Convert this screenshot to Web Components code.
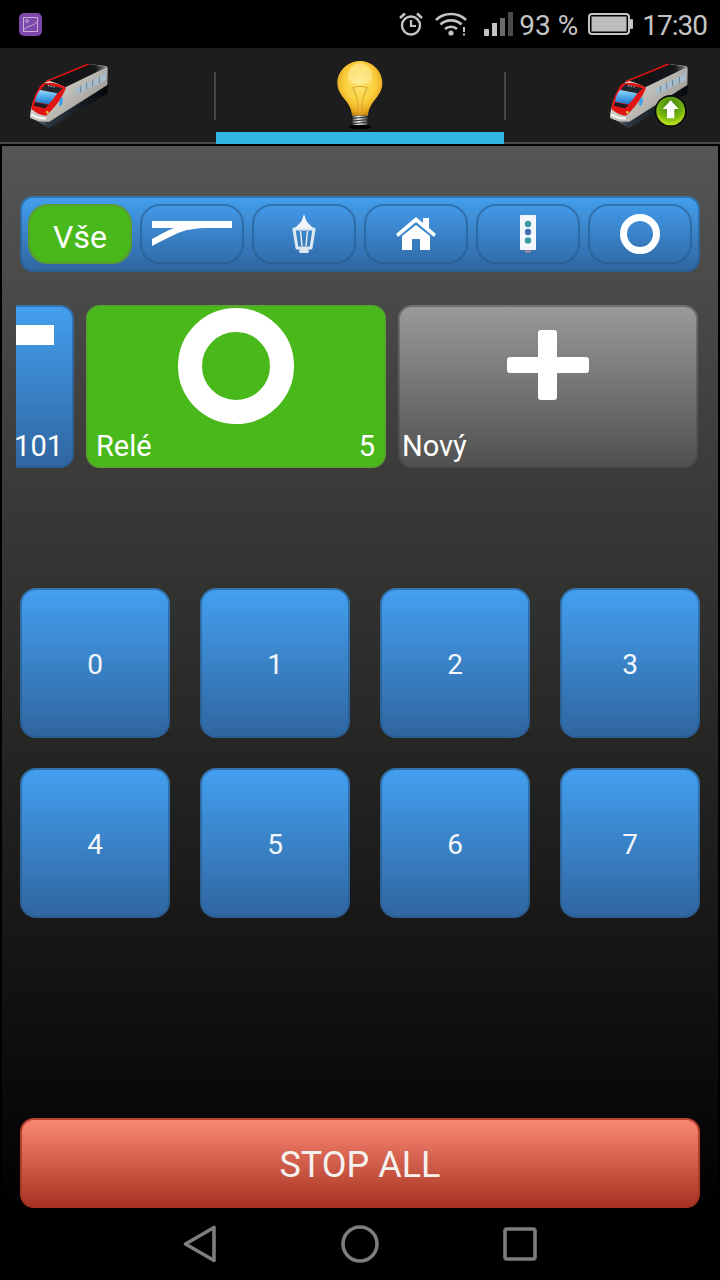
<!DOCTYPE html>
<html>
<head>
<meta charset="utf-8">
<title>Rail control</title>
<style>
    html, body { margin: 0; padding: 0; background: #000; }
    body {
        width: 720px;
        height: 1280px;
        overflow: hidden;
        display: flex;
        flex-direction: column;
        font-family: Roboto, "Liberation Sans", sans-serif;
    }
</style>
</head>
<body>
<status-bar></status-bar>

<tab-bar>
    <tab-item style="width:214px;padding-left:20px"><train-icon></train-icon></tab-item>
    <tab-sep></tab-sep>
    <tab-item selected style="width:288px;justify-content:center"><bulb-icon></bulb-icon></tab-item>
    <tab-sep></tab-sep>
    <tab-item style="width:214px;justify-content:flex-end;padding-right:20px"><train-icon upload></train-icon></tab-item>
</tab-bar>

<rail-panel>
    <filter-bar>
        <filter-btn selected><span>Vše</span></filter-btn>
        <filter-btn>
            <svg width="80" height="26" viewBox="0 0 80 26">
                <path d="M0 0H80V7H60C42 7 33 9 26 12C17 16 8 21 0 25V18C6 15 14 10 22 7H0Z" fill="#fff"/>
            </svg>
        </filter-btn>
        <filter-btn>
            <svg width="26" height="40" viewBox="0 0 26 40">
                <path d="M13 0L15 6L16 8L22 14H4L10 8L11 6Z" fill="#f2f6fa"/>
                <path d="M3 15H23L20 34H6Z" fill="none" stroke="#dfe9f2" stroke-width="3" stroke-linejoin="round"/>
                <path d="M9.5 17L11 32M16.5 17L15 32" stroke="#dfe9f2" stroke-width="1.6"/>
                <rect x="8" y="35" width="10" height="4" rx="2" fill="#dde7f0"/>
            </svg>
        </filter-btn>
        <filter-btn>
            <svg width="40" height="34" viewBox="0 0 40 34">
                <path d="M0 17L20 0L27 6V1H33V11L40 17L38 20L20 5L2 20Z" fill="#fff"/>
                <path d="M6 19L20 8L34 19V33H24V22H16V33H6Z" fill="#fff"/>
            </svg>
        </filter-btn>
        <filter-btn>
            <svg width="16" height="38" viewBox="0 0 16 38">
                <rect width="16" height="35" rx="1" fill="#f4f7fa"/>
                <circle cx="8" cy="9" r="3.2" fill="#3b97a8"/>
                <circle cx="8" cy="17" r="3.2" fill="#4470b8"/>
                <circle cx="8" cy="25.5" r="3.2" fill="#3b97a8"/>
                <rect x="5" y="35.5" width="6" height="2" fill="#b18a9c"/>
            </svg>
        </filter-btn>
        <filter-btn>
            <svg width="40" height="40" viewBox="0 0 40 40">
                <circle cx="20" cy="20" r="16.5" fill="none" stroke="#fff" stroke-width="7"/>
            </svg>
        </filter-btn>
    </filter-bar>

    <card-row>
        <rail-card tone="blue">
            <svg slot="icon" width="260" height="116" viewBox="0 0 260 116"><rect y="17" width="260" height="20" fill="#fff"/></svg>
            <span slot="right">101</span>
        </rail-card>
        <rail-card tone="green" style="--pad-l:8px;--pad-r:9px">
            <svg slot="icon" width="116" height="116" viewBox="0 0 116 116"><circle cx="58" cy="58" r="46" fill="none" stroke="#fff" stroke-width="24"/></svg>
            <span slot="left">Relé</span>
            <span slot="right">5</span>
        </rail-card>
        <rail-card tone="grey" style="--pad-l:2px">
            <svg slot="icon" width="89" height="116" viewBox="0 0 89 116">
                <rect x="38" y="22" width="19" height="70" rx="3" fill="#fff"/>
                <rect x="7" y="49" width="82" height="16" rx="3" fill="#fff"/>
            </svg>
            <span slot="left">Nový</span>
        </rail-card>
    </card-row>

    <key-grid>
        <num-key>0</num-key>
        <num-key>1</num-key>
        <num-key>2</num-key>
        <num-key>3</num-key>
        <num-key>4</num-key>
        <num-key>5</num-key>
        <num-key>6</num-key>
        <num-key>7</num-key>
    </key-grid>

    <stop-button>STOP ALL</stop-button>
</rail-panel>

<nav-bar></nav-bar>

<script>
// small helper, every element gets an open shadow root from its template
function makeElement(name, html) {
    const $template = document.createElement("template");
    $template.innerHTML = html;
    customElements.define(name, class extends HTMLElement {
        constructor() {
            super();
            this.attachShadow({mode: 'open'});
            this.shadowRoot.appendChild($template.content.cloneNode(true));
        }
    });
}

makeElement("status-bar", /*html*/ `
    <style>
        :host {
            display: flex;
            align-items: center;
            height: 48px;
            flex: none;
            background: #000;
            color: #c4c4c4;
            font-size: 28px;
            box-sizing: border-box;
            padding: 0 13px 0 19px;
        }
        .right { margin-left: auto; display: flex; align-items: center; }
        svg { display: block; }
        span { padding-top: 2px; }
        .pct { margin-left: 6px; }
        .time { margin-left: 9px; letter-spacing: -1px; }
    </style>
    <svg width="23" height="23" viewBox="0 0 23 23">
        <rect width="23" height="23" rx="5" fill="#7d48aa"/>
        <rect x="4.5" y="4.5" width="14" height="14" fill="none" stroke="#c5aed9" stroke-width="1"/>
        <circle cx="8" cy="8" r="1.5" fill="none" stroke="#c5aed9"/>
        <path d="M5 17C8 12 11 15 18 9" fill="none" stroke="#c5aed9"/>
    </svg>
    <div class="right">
        <svg width="24" height="24" viewBox="0 0 24 24" style="margin-right:12px">
            <circle cx="12" cy="13.5" r="9" fill="none" stroke="#c4c4c4" stroke-width="2.4"/>
            <path d="M12 8V14H17" fill="none" stroke="#c4c4c4" stroke-width="2.2"/>
            <path d="M1 6L6 1.5M23 6L18 1.5" stroke="#c4c4c4" stroke-width="2.6"/>
        </svg>
        <svg width="32" height="24" viewBox="0 0 32 24" style="margin-right:17px">
            <path d="M1 8C9 0 23 0 31 8" fill="none" stroke="#c4c4c4" stroke-width="2.6"/>
            <path d="M5.5 12.5C11 7 21 7 26.5 12.5" fill="none" stroke="#c4c4c4" stroke-width="2.6"/>
            <path d="M10 17C13 14 19 14 22 17" fill="none" stroke="#c4c4c4" stroke-width="2.6"/>
            <circle cx="16" cy="21" r="2.6" fill="#c4c4c4"/>
            <rect x="28" y="15" width="2" height="5" fill="#c4c4c4"/>
            <rect x="28" y="21.5" width="2" height="2" fill="#c4c4c4"/>
        </svg>
        <svg width="29" height="24" viewBox="0 0 29 24">
            <rect x="0" y="17" width="5" height="7" rx="1" fill="#c4c4c4"/>
            <rect x="8" y="11" width="5" height="13" fill="#c4c4c4"/>
            <rect x="16" y="6" width="5" height="18" fill="#6b6b6b"/>
            <rect x="24" y="0" width="5" height="24" fill="#4a4a4a"/>
        </svg>
        <span class="pct">93 %</span>
        <svg width="45" height="22" viewBox="0 0 45 22" style="margin-left:10px">
            <rect x="1" y="1" width="40" height="20" rx="3" fill="none" stroke="#c4c4c4" stroke-width="2"/>
            <rect x="3.5" y="3.5" width="35" height="15" fill="#bdbdbd"/>
            <rect x="42" y="6" width="3" height="10" rx="1" fill="#c4c4c4"/>
        </svg>
        <span class="time">17:30</span>
    </div>
`);

makeElement("tab-bar", /*html*/ `
    <style>
        :host {
            display: flex;
            flex: none;
            height: 96px;
            box-sizing: border-box;
            background: #1d1d1d;
            border-bottom: 2px solid #4a4a4a;
        }
    </style>
    <slot></slot>
`);

makeElement("tab-sep", /*html*/ `
    <style>
        :host {
            display: block;
            flex: none;
            width: 2px;
            height: 48px;
            margin-top: 24px;
            background: #474747;
        }
    </style>
`);

makeElement("tab-item", /*html*/ `
    <style>
        :host {
            display: flex;
            flex: none;
            box-sizing: border-box;
            align-items: flex-start;
        }
        :host([selected]) {
            border-bottom: 12px solid #33b5e5;
            margin-bottom: -2px;
        }
    </style>
    <slot></slot>
`);

makeElement("train-icon", /*html*/ `
    <style>
        :host { display: block; width: 100px; height: 80px; margin-top: 7px; }
        svg { display: block; }
        .badge { display: none; }
        :host([upload]) .badge { display: inline; }
    </style>
    <svg width="100" height="80" viewBox="0 0 300 240">
        <defs>
            <linearGradient id="silver" x1="0" y1="0" x2="1" y2="0.7">
                <stop offset="0" stop-color="#f4f4f2"/>
                <stop offset="0.45" stop-color="#cbc8c2"/>
                <stop offset="1" stop-color="#94928e"/>
            </linearGradient>
            <linearGradient id="roof" x1="0" y1="0" x2="1" y2="0">
                <stop offset="0" stop-color="#101214"/>
                <stop offset="0.8" stop-color="#15171a"/>
                <stop offset="1" stop-color="#8e8e8e"/>
            </linearGradient>
            <linearGradient id="glass" x1="0" y1="0" x2="0" y2="1">
                <stop offset="0" stop-color="#8fdcff"/>
                <stop offset="1" stop-color="#1474cf"/>
            </linearGradient>
            <linearGradient id="under" x1="0" y1="0" x2="1" y2="0">
                <stop offset="0" stop-color="#a6b2ba"/>
                <stop offset="0.22" stop-color="#2c3640"/>
                <stop offset="1" stop-color="#05080b"/>
            </linearGradient>
            <radialGradient id="ball" cx="0.5" cy="0.3" r="0.75">
                <stop offset="0" stop-color="#3d7f10"/>
                <stop offset="0.6" stop-color="#74b50e"/>
                <stop offset="1" stop-color="#d7f020"/>
            </radialGradient>
        </defs>
        <path d="M30 184L86 220L262 116L264 86L88 186Z" fill="url(#under)"/>
        <path d="M30 186C32 150 50 105 82 76L206 27L256 33Q264 34 263 44L262 90L88 200Q58 203 32 190Z" fill="url(#silver)"/>
        <path d="M82 76L206 27L262 36L232 50L136 97Q108 82 82 76Z" fill="url(#roof)"/>
        <path d="M78 80L206 27" fill="none" stroke="#e30f0f" stroke-width="4.5"/>
        <path d="M165 101L258 55L258 74L168 120Z" fill="#a8bccb"/>
        <path d="M182 92V112M200 83V103M218 74V94M238 65V85" stroke="#6d8294" stroke-width="3"/>
        <path d="M66 86C48 108 38 135 34 162Q55 180 78 182C104 158 126 130 138 98Q100 76 66 86Z" fill="#e01414"/>
        <path d="M76 88L128 100L112 116L62 104Z" fill="#20262c"/>
        <path d="M60 105L112 115Q100 134 86 148L45 140Q48 120 60 105Z" fill="url(#glass)"/>
        <path d="M45 142L86 150L74 160L42 152Z" fill="#1b1d20"/>
        <path d="M84 92L104 96" stroke="#8b98a5" stroke-width="5" stroke-dasharray="4 4"/>
        <path d="M34 178Q55 192 78 190" fill="none" stroke="#f6f5f2" stroke-width="7"/>
        <circle cx="82" cy="172" r="4" fill="#e2c52a"/>
        <ellipse cx="123" cy="140" rx="5" ry="13" transform="rotate(12 123 140)" fill="#3f9fe6"/>
        <g class="badge">
            <circle cx="212" cy="168" r="48" fill="#0a0a0a"/>
            <circle cx="212" cy="168" r="43" fill="url(#ball)"/>
            <path d="M212 136L236 162H223V190H201V162H188Z" fill="#fff"/>
        </g>
    </svg>
`);

makeElement("bulb-icon", /*html*/ `
    <style>
        :host { display: block; width: 80px; height: 80px; margin-top: 7px; }
        svg { display: block; }
    </style>
    <svg width="80" height="80" viewBox="0 0 240 240">
        <defs>
            <radialGradient id="glow" cx="0.5" cy="0.4" r="0.62">
                <stop offset="0" stop-color="#ffe87a"/>
                <stop offset="0.55" stop-color="#fbcf3c"/>
                <stop offset="0.85" stop-color="#e8a920"/>
                <stop offset="1" stop-color="#b87a12"/>
            </radialGradient>
            <linearGradient id="screw" x1="0" y1="0" x2="1" y2="0">
                <stop offset="0" stop-color="#5c5c5c"/>
                <stop offset="0.4" stop-color="#efefef"/>
                <stop offset="1" stop-color="#4a4a4a"/>
            </linearGradient>
        </defs>
        <ellipse cx="120" cy="216" rx="36" ry="6" fill="#000"/>
        <path d="M120 18C84 18 52 47 52 85C52 112 72 128 84 146C92 158 95 168 96 182H144C145 168 148 158 156 146C168 128 187 112 187 85C187 47 156 18 120 18Z" fill="url(#glow)"/>
        <path d="M120 24C96 26 82 46 84 70C86 92 140 95 155 72C162 50 146 26 120 24Z" fill="#fff6c4" opacity=".4"/>
        <path d="M94 100Q120 88 146 100M100 100L114 140V178M140 100L126 140V178" fill="none" stroke="#d3a530" stroke-width="3"/>
        <rect x="98" y="182" width="44" height="28" rx="4" fill="url(#screw)"/>
        <path d="M98 190L142 186M98 198L142 194M100 206L140 202" stroke="#2e2e2e" stroke-width="3"/>
    </svg>
`);

makeElement("rail-panel", /*html*/ `
    <style>
        :host {
            display: flex;
            flex-direction: column;
            flex: 1;
            min-height: 0;
            margin: 2px 2px 0;
            padding: 50px 18px 8px;
            background: linear-gradient(#555653, #000);
        }
    </style>
    <slot></slot>
`);

makeElement("filter-bar", /*html*/ `
    <style>
        :host {
            display: flex;
            gap: 8px;
            flex: none;
            height: 76px;
            box-sizing: border-box;
            padding: 6px;
            border: 2px solid rgba(40, 90, 140, .65);
            border-radius: 13px;
            background: linear-gradient(#44a0f0, #2f659f) border-box;
        }
    </style>
    <slot></slot>
`);

makeElement("filter-btn", /*html*/ `
    <style>
        :host {
            display: flex;
            align-items: center;
            justify-content: center;
            width: 104px;
            height: 60px;
            box-sizing: border-box;
            border: 2px solid rgba(40, 90, 140, .6);
            border-radius: 20px;
            color: #fff;
            font-size: 32px;
        }
        :host([selected]) {
            background: #48b81a;
            border-color: #5a9c32;
        }
        ::slotted(span) { margin-top: 6px; }
    </style>
    <slot></slot>
`);

makeElement("card-row", /*html*/ `
    <style>
        :host {
            display: flex;
            justify-content: flex-end;
            gap: 12px;
            flex: none;
            overflow: hidden;
            margin: 33px 0 0 -4px;
            padding-right: 2px;
        }
    </style>
    <slot></slot>
`);

makeElement("rail-card", /*html*/ `
    <style>
        :host {
            display: flex;
            flex-direction: column;
            align-items: center;
            flex: none;
            width: 300px;
            height: 163px;
            box-sizing: border-box;
            padding: 1px var(--pad-r, 9px) 0 var(--pad-l, 9px);
            border: 2px solid;
            border-radius: 14px;
            color: #fff;
            font-size: 29px;
        }
        :host([tone="blue"]) { background: linear-gradient(#44a0f0, #2f659f) border-box; border-color: rgba(40, 90, 140, .65); }
        :host([tone="green"]) { background: #48b81a border-box; border-color: #55a62c; }
        :host([tone="grey"]) { background: linear-gradient(#9a9a9a, #4f4f4f) border-box; border-color: rgba(70, 70, 70, .5); }
        .icon { height: 116px; flex: none; }
        ::slotted(svg) { display: block; }
        .labels {
            display: flex;
            justify-content: space-between;
            align-self: stretch;
            line-height: 32px;
            margin-top: 6px;
        }
    </style>
    <div class="icon"><slot name="icon"></slot></div>
    <div class="labels"><slot name="left"><span></span></slot><slot name="right"></slot></div>
`);

makeElement("key-grid", /*html*/ `
    <style>
        :host {
            display: grid;
            grid-template-columns: 150px 150px 150px 140px;
            grid-auto-rows: 150px;
            gap: 30px;
            flex: none;
            margin-top: 120px;
        }
    </style>
    <slot></slot>
`);

makeElement("num-key", /*html*/ `
    <style>
        :host {
            display: flex;
            align-items: center;
            justify-content: center;
            box-sizing: border-box;
            padding-top: 2px;
            border: 2px solid rgba(40, 90, 140, .65);
            border-radius: 16px;
            background: linear-gradient(#44a0f0, #2f659f) border-box;
            color: #f2f6fa;
            font-size: 28px;
        }
    </style>
    <slot></slot>
`);

makeElement("stop-button", /*html*/ `
    <style>
        :host {
            display: flex;
            align-items: center;
            justify-content: center;
            flex: none;
            height: 90px;
            margin-top: auto;
            box-sizing: border-box;
            padding-top: 4px;
            border: 2px solid rgba(170, 50, 30, .8);
            border-radius: 14px;
            background: linear-gradient(#fb8a75, #a63120) border-box;
            color: #f4f1ef;
            font-size: 36px;
        }
    </style>
    <slot></slot>
`);

makeElement("nav-bar", /*html*/ `
    <style>
        :host {
            display: flex;
            align-items: center;
            justify-content: center;
            flex: none;
            height: 64px;
            box-sizing: border-box;
            background: #000;
            padding-bottom: 8px;
        }
        svg { display: block; }
    </style>
    <svg width="34" height="38" viewBox="0 0 34 38" style="margin-right:124px">
        <path d="M31 2.5V35.5L2.5 19Z" fill="none" stroke="#7d7d7d" stroke-width="3.6" stroke-linejoin="round"/>
    </svg>
    <svg width="38" height="38" viewBox="0 0 38 38" style="margin-right:124px">
        <circle cx="19" cy="19" r="17" fill="none" stroke="#7d7d7d" stroke-width="3.6"/>
    </svg>
    <svg width="34" height="34" viewBox="0 0 34 34">
        <rect x="2" y="2" width="30" height="30" rx="2" fill="none" stroke="#7d7d7d" stroke-width="3.6"/>
    </svg>
`);
</script>
</body>
</html>
